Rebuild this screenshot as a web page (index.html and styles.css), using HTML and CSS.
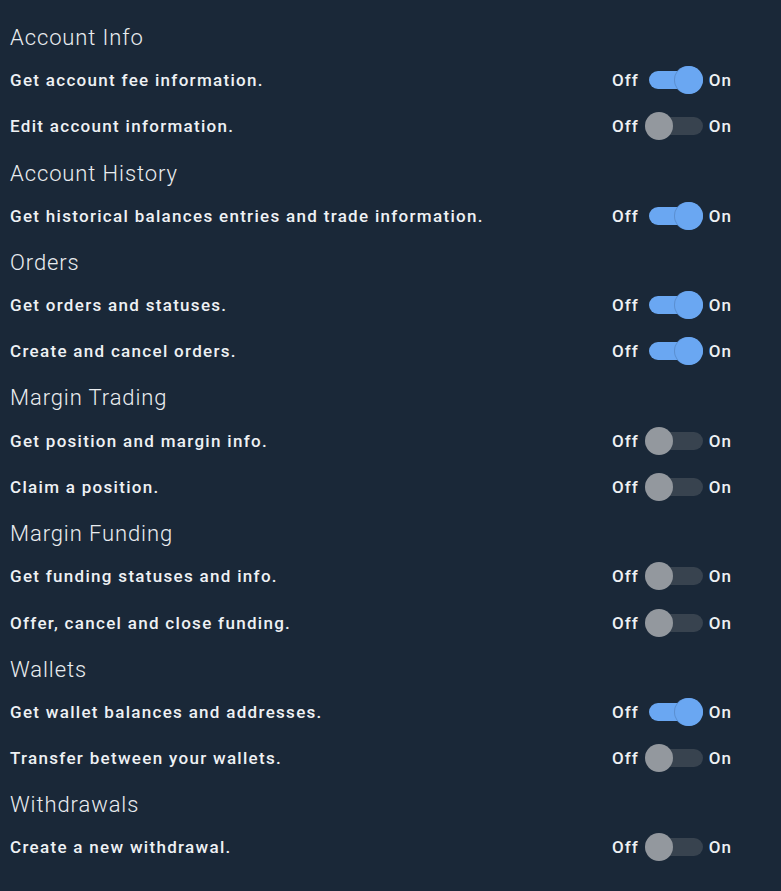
FILE: index.html
```html
<!DOCTYPE html>
<html>

<head>
    <title>API Key Permissions</title>
    <link rel="stylesheet" href="styles.css">
</head>

<body>
    <div class="permisos">
        <h2 class="grupo">Account Info</h2>
        <div class="fila">
            <span class="texto">Get account fee information.</span>
            <div class="toggle"><span>Off</span><span class="switch on"></span><span>On</span></div>
        </div>
        <div class="fila">
            <span class="texto">Edit account information.</span>
            <div class="toggle"><span>Off</span><span class="switch"></span><span>On</span></div>
        </div>

        <h2 class="grupo">Account History</h2>
        <div class="fila">
            <span class="texto">Get historical balances entries and trade information.</span>
            <div class="toggle"><span>Off</span><span class="switch on"></span><span>On</span></div>
        </div>

        <h2 class="grupo">Orders</h2>
        <div class="fila">
            <span class="texto">Get orders and statuses.</span>
            <div class="toggle"><span>Off</span><span class="switch on"></span><span>On</span></div>
        </div>
        <div class="fila">
            <span class="texto">Create and cancel orders.</span>
            <div class="toggle"><span>Off</span><span class="switch on"></span><span>On</span></div>
        </div>

        <h2 class="grupo">Margin Trading</h2>
        <div class="fila">
            <span class="texto">Get position and margin info.</span>
            <div class="toggle"><span>Off</span><span class="switch"></span><span>On</span></div>
        </div>
        <div class="fila">
            <span class="texto">Claim a position.</span>
            <div class="toggle"><span>Off</span><span class="switch"></span><span>On</span></div>
        </div>

        <h2 class="grupo">Margin Funding</h2>
        <div class="fila">
            <span class="texto">Get funding statuses and info.</span>
            <div class="toggle"><span>Off</span><span class="switch"></span><span>On</span></div>
        </div>
        <div class="fila">
            <span class="texto">Offer, cancel and close funding.</span>
            <div class="toggle"><span>Off</span><span class="switch"></span><span>On</span></div>
        </div>

        <h2 class="grupo">Wallets</h2>
        <div class="fila">
            <span class="texto">Get wallet balances and addresses.</span>
            <div class="toggle"><span>Off</span><span class="switch on"></span><span>On</span></div>
        </div>
        <div class="fila">
            <span class="texto">Transfer between your wallets.</span>
            <div class="toggle"><span>Off</span><span class="switch"></span><span>On</span></div>
        </div>

        <h2 class="grupo">Withdrawals</h2>
        <div class="fila">
            <span class="texto">Create a new withdrawal.</span>
            <div class="toggle"><span>Off</span><span class="switch"></span><span>On</span></div>
        </div>
    </div>
</body>

</html>
```

FILE: styles.css
```css
body {
    margin: 0;
    background-color: #1a2838;
    color: #eef1f4;
    font-family: Roboto, "Noto Sans", sans-serif;
}

.permisos {
    padding: 14px 49px 0 10px;
}

.grupo {
    margin: 0;
    padding: 12px 0 7px 0;
    line-height: 24px;
    font-size: 22px;
    font-weight: 300;
    letter-spacing: 0.9px;
    color: #eaedf0;
}

.fila {
    display: flex;
    align-items: center;
    justify-content: space-between;
    height: 46.3px;
    font-size: 17px;
    font-weight: 500;
    letter-spacing: 1.3px;
}

.toggle {
    display: flex;
    align-items: center;
    letter-spacing: 1px;
}

.switch {
    position: relative;
    display: inline-block;
    width: 54px;
    height: 18px;
    margin: 0 6px 0 10px;
    border-radius: 9px;
    background-color: #38434f;
}

.switch::after {
    content: "";
    position: absolute;
    top: -5px;
    left: -4px;
    width: 28px;
    height: 28px;
    border-radius: 50%;
    background-color: #93989e;
}

.switch.on {
    background-color: #6aa7f2;
}

.switch.on::after {
    left: auto;
    right: 0;
    background-color: #6aa7f2;
    box-shadow: -1px 0 0 #5b8fd0;
}
```
